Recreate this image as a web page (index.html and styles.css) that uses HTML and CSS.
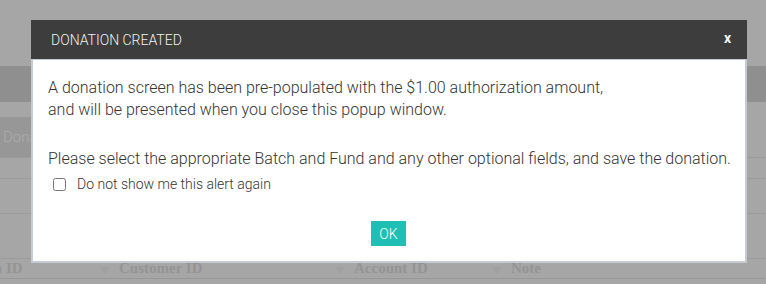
FILE: index.html
```html
<!DOCTYPE html>
<html lang="en">

<head>
    <meta charset="UTF-8">
    <meta name="viewport" content="width=device-width, initial-scale=1.0">
    <title>Donation</title>
    <link rel="stylesheet" href="styles.css">
</head>

<body>
    <!-- page behind the popup -->
    <div class="page">
        <div class="topbar"></div>
        <div class="toolbar">
            <button class="btn-add">Donation</button>
        </div>
        <div class="row row-short"></div>
        <div class="row"></div>
        <div class="row row-tall"></div>
        <div class="thead">
            <div class="th th-first">Donation ID</div>
            <div class="th th-customer"><span class="sort"></span>Customer ID</div>
            <div class="th th-account"><span class="sort"></span>Account ID</div>
            <div class="th"><span class="sort"></span>Note</div>
        </div>
    </div>

    <!-- popup -->
    <div class="modal">
        <div class="modal-header">
            <span class="modal-title">Donation Created</span>
            <span class="modal-close">x</span>
        </div>
        <div class="modal-body">
            <p class="msg">A donation screen has been pre-populated with the $1.00 authorization amount,<br>
                and will be presented when you close this popup window.</p>
            <p class="msg">Please select the appropriate Batch and Fund and any other optional fields, and save the donation.</p>
            <label class="check">
                <input type="checkbox">
                <span>Do not show me this alert again</span>
            </label>
            <div class="modal-footer">
                <button class="btn-ok">OK</button>
            </div>
        </div>
    </div>
</body>

</html>
```

FILE: styles.css
```css
body {
    margin: 0;
    background: #a6a6a6;
    font-family: Roboto, "Liberation Sans", sans-serif;
    height: 284px;
    overflow: hidden;
}

.page {
    display: flex;
    flex-direction: column;
}

.topbar {
    margin-top: 66px;
    height: 36px;
    background: #8f8f8f;
}

.toolbar {
    margin-top: 15px;
    height: 40px;
    display: flex;
}

.btn-add {
    width: 110px;
    height: 40px;
    border: 0;
    padding: 0 0 0 3px;
    text-align: left;
    background: #979797;
    color: #adadad;
    font-family: Roboto, sans-serif;
    font-weight: 300;
    font-size: 15px;
}

.row {
    height: 34px;
    border-top: 1px solid #9b9b9b;
}

.row-short {
    height: 20px;
}

.row-tall {
    height: 44px;
}

.thead {
    display: flex;
    height: 19px;
    border-top: 1px solid #9b9b9b;
    border-bottom: 1px solid #989898;
    align-items: center;
}

.th {
    font-family: "Liberation Serif", serif;
    font-weight: bold;
    font-size: 15px;
    color: #949494;
    display: flex;
    align-items: center;
    white-space: nowrap;
}

.th-first {
    width: 157px;
    margin-left: -57px;
    flex-shrink: 0;
}

.th-customer {
    width: 235px;
    flex-shrink: 0;
}

.th-account {
    width: 157px;
    flex-shrink: 0;
}

.sort {
    width: 0;
    height: 0;
    border-left: 5px solid transparent;
    border-right: 5px solid transparent;
    border-top: 7px solid #a0a0a0;
    margin: 4px 9px 0 0;
}

/* popup */
.modal {
    position: absolute;
    left: 31px;
    top: 20px;
    width: 716px;
}

.modal-header {
    height: 39px;
    background: #3d3d3d;
    color: #f2f2f2;
    display: flex;
    align-items: center;
    justify-content: space-between;
    padding: 0 16px 0 20px;
}

.modal-title {
    text-transform: uppercase;
    font-size: 14px;
    font-weight: 300;
}

.modal-close {
    font-weight: bold;
    font-size: 14px;
    margin-top: -4px;
}

.modal-body {
    background: #fff;
    border: 2px solid #c3cbd6;
    border-top: 1px solid #c3cbd6;
    padding: 17px 16px 15px 15px;
    color: #333;
}

.msg {
    margin: 0 0 27px;
    font-size: 16px;
    font-weight: 300;
    line-height: 22px;
    white-space: nowrap;
}

.msg + .msg {
    margin-bottom: 4px;
}

.check {
    display: flex;
    align-items: center;
    height: 20px;
    font-size: 14px;
    font-weight: 300;
    color: #333;
}

.check input {
    width: 13px;
    height: 13px;
    margin: 0 11px 0 5px;
}

.modal-footer {
    display: flex;
    justify-content: center;
    margin-top: 27px;
}

.btn-ok {
    height: 25px;
    padding: 0 8px;
    border: 0;
    background: #1fbfb6;
    color: #fff;
    font-family: Roboto, sans-serif;
    font-weight: 300;
    font-size: 14px;
}
```
